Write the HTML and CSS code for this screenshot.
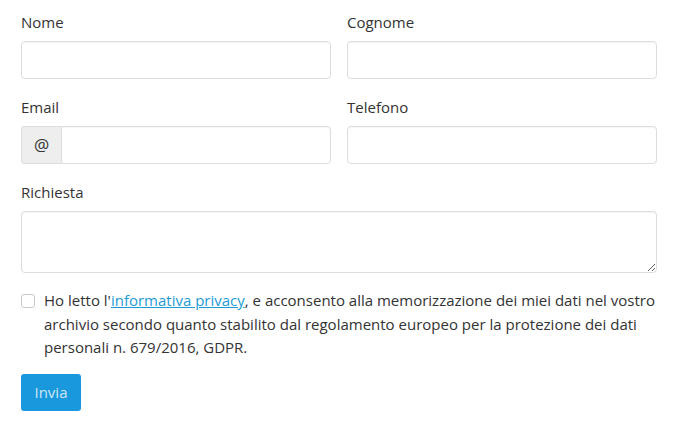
FILE: index.html
```html
<!DOCTYPE html>
<html lang="it">
<head>
<meta charset="utf-8">
<link rel="stylesheet" href="styles.css">
</head>
<body>
<form class="form">
  <div class="row">
    <div class="group">
      <label class="label">Nome</label>
      <input class="input" type="text">
    </div>
    <div class="group">
      <label class="label">Cognome</label>
      <input class="input" type="text">
    </div>
  </div>
  <div class="row">
    <div class="group">
      <label class="label">Email</label>
      <div class="input-group">
        <span class="addon">@</span>
        <input class="input input-join" type="text">
      </div>
    </div>
    <div class="group">
      <label class="label">Telefono</label>
      <input class="input" type="text">
    </div>
  </div>
  <div class="group">
    <label class="label">Richiesta</label>
    <textarea class="textarea"></textarea>
  </div>
  <div class="check">
    <span class="box"></span>
    <p class="check-text">Ho letto l'<a class="link" href="#">informativa privacy</a>, e acconsento alla memorizzazione dei miei dati nel vostro archivio secondo quanto stabilito dal regolamento europeo per la protezione dei dati personali n. 679/2016, GDPR.</p>
  </div>
  <button class="btn" type="button">Invia</button>
</form>
</body>
</html>
```
FILE: styles.css
```css
* { box-sizing: border-box; }
html, body { margin: 0; background: #fff; }
body {
  font-family: "Open Sans", "Liberation Sans", sans-serif;
  font-size: 15px;
  color: #333;
}
.form {
  width: 636px;
  margin-left: 21px;
  padding-top: 12px;
}
.row {
  display: grid;
  grid-template-columns: 1fr 1fr;
  column-gap: 16px;
}
.group {
  display: flex;
  flex-direction: column;
  margin-bottom: 18px;
}
.label {
  display: block;
  line-height: 20px;
  margin-bottom: 9px;
}
.label-tight {
  margin-bottom: 8px;
}
.input {
  height: 38px;
  width: 100%;
  border: 1px solid #ddd;
  border-radius: 4px;
  background: #fff;
  box-shadow: inset 0 1px 1px rgba(0,0,0,0.04);
  font: inherit;
  padding: 6px 12px;
  outline: none;
}
.input-group {
  display: flex;
  height: 38px;
}
.addon {
  width: 40px;
  flex: none;
  display: flex;
  align-items: center;
  justify-content: center;
  background: #eee;
  border: 1px solid #ddd;
  border-right: none;
  border-radius: 4px 0 0 4px;
  color: #333;
  font-size: 17px;
  padding-bottom: 1px;
}
.input-join {
  border-radius: 0 4px 4px 0;
  flex: 1;
}
.textarea {
  display: block;
  width: 100%;
  height: 62px;
  border: 1px solid #ddd;
  border-radius: 4px;
  box-shadow: inset 0 1px 1px rgba(0,0,0,0.04);
  font: inherit;
  padding: 6px 12px;
  outline: none;
  resize: vertical;
}
.check {
  display: flex;
  align-items: flex-start;
  margin-top: -2px;
}
.box {
  flex: none;
  width: 14px;
  height: 14px;
  margin-top: 5px;
  margin-right: 9px;
  border: 1px solid #c8c8c8;
  border-radius: 3px;
  background: #fff;
}
.check-text {
  margin: 0;
  line-height: 23.5px;
}
.link {
  color: #1d9cd3;
  text-decoration: underline;
}
.btn {
  margin-top: 14px;
  width: 60px;
  height: 37px;
  padding: 0;
  border: none;
  border-radius: 3px;
  background: #1a98dd;
  color: #cbe7f8;
  font-family: "Open Sans", "Liberation Sans", sans-serif;
  font-size: 15px;
}
```
